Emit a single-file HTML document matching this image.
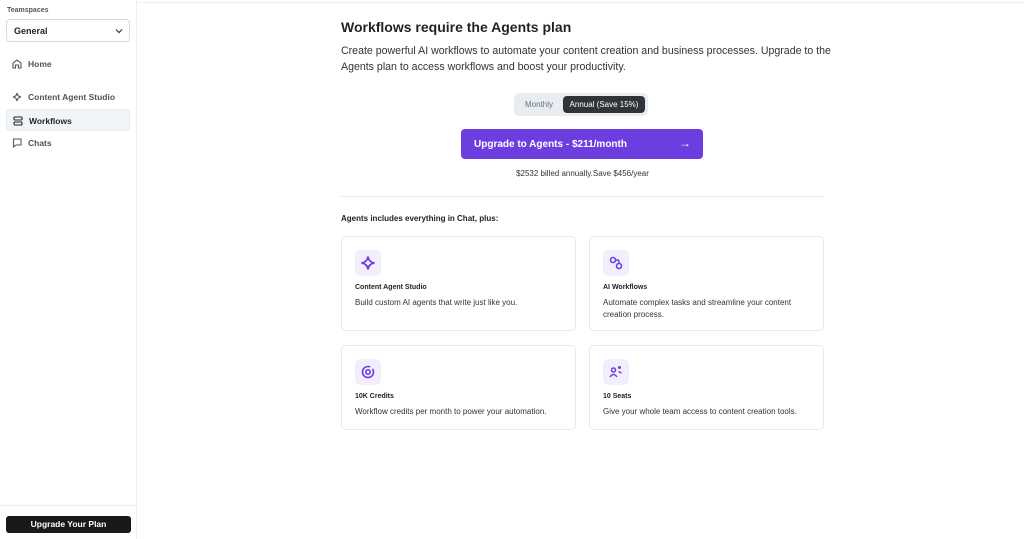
<!DOCTYPE html>
<html><head><meta charset="utf-8"><style>
*{box-sizing:border-box;margin:0;padding:0}
body{width:1024px;height:539px;overflow:hidden;background:#fff;font-family:"Liberation Sans",sans-serif;color:#1f2328;position:relative}
.side{position:absolute;left:0;top:0;width:137px;height:539px;border-right:1px solid #eceef1;background:#fff}
.ts{position:absolute;left:7px;top:7px;font-size:7px;color:#555;font-weight:bold}
.sel{position:absolute;left:6px;top:19px;width:124px;height:23px;border:1px solid #d5d8dc;border-radius:4px;font-size:9px;font-weight:bold;padding:6px 0 0 7px}
.sel svg{position:absolute;right:6px;top:8px}
.nav{position:absolute;left:6px;width:124px;height:22px;font-size:8.5px;font-weight:bold;color:#555;padding:6px 0 0 22px;border-radius:4px}
.nav svg{position:absolute;left:6px;top:6px}
.nav.act{background:#f2f5f7;color:#1f2328;border:1px solid #e6ebee}
.bot{position:absolute;left:0;top:505px;width:137px;border-top:1px solid #eceef1}
.upb{position:absolute;left:6px;top:516px;width:125px;height:17px;background:#18191b;color:#fff;border-radius:3px;font-size:8.5px;font-weight:bold;text-align:center;line-height:17px}
.topline{position:absolute;left:137px;top:0;right:0;height:3px;border-bottom:1px solid #eceef1}
h1{position:absolute;left:341px;top:19px;font-size:14px;font-weight:bold}
.desc{position:absolute;left:341px;top:43px;width:490px;font-size:10.6px;line-height:16px;color:#333}
.tog{position:absolute;left:514px;top:93px;width:134px;height:23px;background:#e8edf1;border-radius:5px}
.tog .m{position:absolute;left:11px;top:7px;font-size:8px;color:#6b7280}
.tog .a{position:absolute;left:49px;top:3px;width:82px;height:17px;background:#303438;color:#fff;border-radius:4px;font-size:8px;text-align:center;line-height:17px}
.cta{position:absolute;left:461px;top:129px;width:242px;height:30px;background:#6c3ee0;border-radius:4px;color:#fff;font-size:10px;font-weight:bold;padding:10px 0 0 13px}
.cta span{position:absolute;right:12px;top:7px;font-size:12px}
.bill{position:absolute;left:341px;width:483px;top:169px;text-align:center;font-size:8px;color:#333}
.hr{position:absolute;left:341px;top:196px;width:483px;border-top:1px solid #e5e7eb}
.inc{position:absolute;left:341px;top:214px;font-size:8px;font-weight:bold;color:#222}
.card{position:absolute;width:235px;border:1px solid #e6eaee;border-radius:5px}
.ic{position:absolute;left:13px;top:13px;width:26px;height:26px;background:#f1effd;border-radius:5px}
.ic svg{position:absolute;left:5px;top:5px}
.ct{position:absolute;left:13px;top:47px;font-size:7px;font-weight:bold;color:#222}
.cd{position:absolute;left:13px;top:60px;width:212px;font-size:8px;line-height:11.5px;color:#333}
</style></head><body>
<div class="side">
<div class="ts">Teamspaces</div>
<div class="sel">General<svg width="8" height="6" viewBox="0 0 8 6"><path d="M1 1.5 4 4.5 7 1.5" fill="none" stroke="#333" stroke-width="1.2"/></svg></div>
<div class="nav" style="top:53px">Home<svg width="10" height="10" viewBox="0 0 10 10"><path d="M1 9V4L5 1 9 4V9H6.5V6h-3v3Z" fill="none" stroke="#555" stroke-width="1.1"/></svg></div>
<div class="nav" style="top:86px">Content Agent Studio<svg width="10" height="10" viewBox="0 0 10 10"><path d="M5 1Q5.5 4.5 9 5 5.5 5.5 5 9 4.5 5.5 1 5 4.5 4.5 5 1Z" fill="none" stroke="#555" stroke-width="1.1"/></svg></div>
<div class="nav act" style="top:109px">Workflows<svg width="10" height="10" viewBox="0 0 10 10"><rect x="1" y="1" width="8" height="3" rx="1" fill="none" stroke="#222" stroke-width="1.1"/><rect x="1" y="6" width="8" height="3" rx="1" fill="none" stroke="#222" stroke-width="1.1"/></svg></div>
<div class="nav" style="top:132px">Chats<svg width="10" height="10" viewBox="0 0 10 10"><path d="M1 1h8v6H4L1.5 9V1Z" fill="none" stroke="#555" stroke-width="1.1"/></svg></div>
<div class="bot"></div>
<div class="upb">Upgrade Your Plan</div>
</div>
<div class="topline"></div>
<h1>Workflows require the Agents plan</h1>
<div class="desc">Create powerful AI workflows to automate your content creation and business processes. Upgrade to the Agents plan to access workflows and boost your productivity.</div>
<div class="tog"><div class="m">Monthly</div><div class="a">Annual (Save 15%)</div></div>
<div class="cta">Upgrade to Agents - $211/month<span>→</span></div>
<div class="bill">$2532 billed annually.Save $456/year</div>
<div class="hr"></div>
<div class="inc">Agents includes everything in Chat, plus:</div>
<div class="card" style="left:341px;top:236px;height:95px"><div class="ic"><svg width="16" height="16" viewBox="0 0 16 16"><path d="M8 2Q9 7 14 8 9 9 8 14 7 9 2 8 7 7 8 2Z" fill="none" stroke="#6c3ee0" stroke-width="1.8" stroke-linejoin="round"/></svg></div><div class="ct">Content Agent Studio</div><div class="cd">Build custom AI agents that write just like you.</div></div>
<div class="card" style="left:589px;top:236px;height:95px"><div class="ic"><svg width="16" height="16" viewBox="0 0 16 16"><circle cx="5" cy="5" r="2.5" fill="none" stroke="#6c3ee0" stroke-width="1.6"/><circle cx="11" cy="11" r="2.5" fill="none" stroke="#6c3ee0" stroke-width="1.6"/><path d="M7.5 5H9.5Q11 5 11 7V8.5" fill="none" stroke="#6c3ee0" stroke-width="1.4"/></svg></div><div class="ct">AI Workflows</div><div class="cd">Automate complex tasks and streamline your content creation process.</div></div>
<div class="card" style="left:341px;top:345px;height:85px"><div class="ic"><svg width="16" height="16" viewBox="0 0 16 16"><circle cx="8" cy="8" r="5.5" fill="none" stroke="#6c3ee0" stroke-width="1.6" stroke-dasharray="28 3"/><circle cx="8" cy="8" r="2.2" fill="none" stroke="#6c3ee0" stroke-width="1.6"/></svg></div><div class="ct">10K Credits</div><div class="cd">Workflow credits per month to power your automation.</div></div>
<div class="card" style="left:589px;top:345px;height:85px"><div class="ic"><svg width="16" height="16" viewBox="0 0 16 16"><circle cx="5.5" cy="6" r="2" fill="none" stroke="#6c3ee0" stroke-width="1.5"/><path d="M2 13Q5.5 8 9 13" fill="none" stroke="#6c3ee0" stroke-width="1.5"/><circle cx="11.5" cy="3.5" r="1.5" fill="#6c3ee0"/><path d="M10.5 7.5 13.5 9" stroke="#6c3ee0" stroke-width="1.5"/></svg></div><div class="ct">10 Seats</div><div class="cd">Give your whole team access to content creation tools.</div></div>
</body></html>
